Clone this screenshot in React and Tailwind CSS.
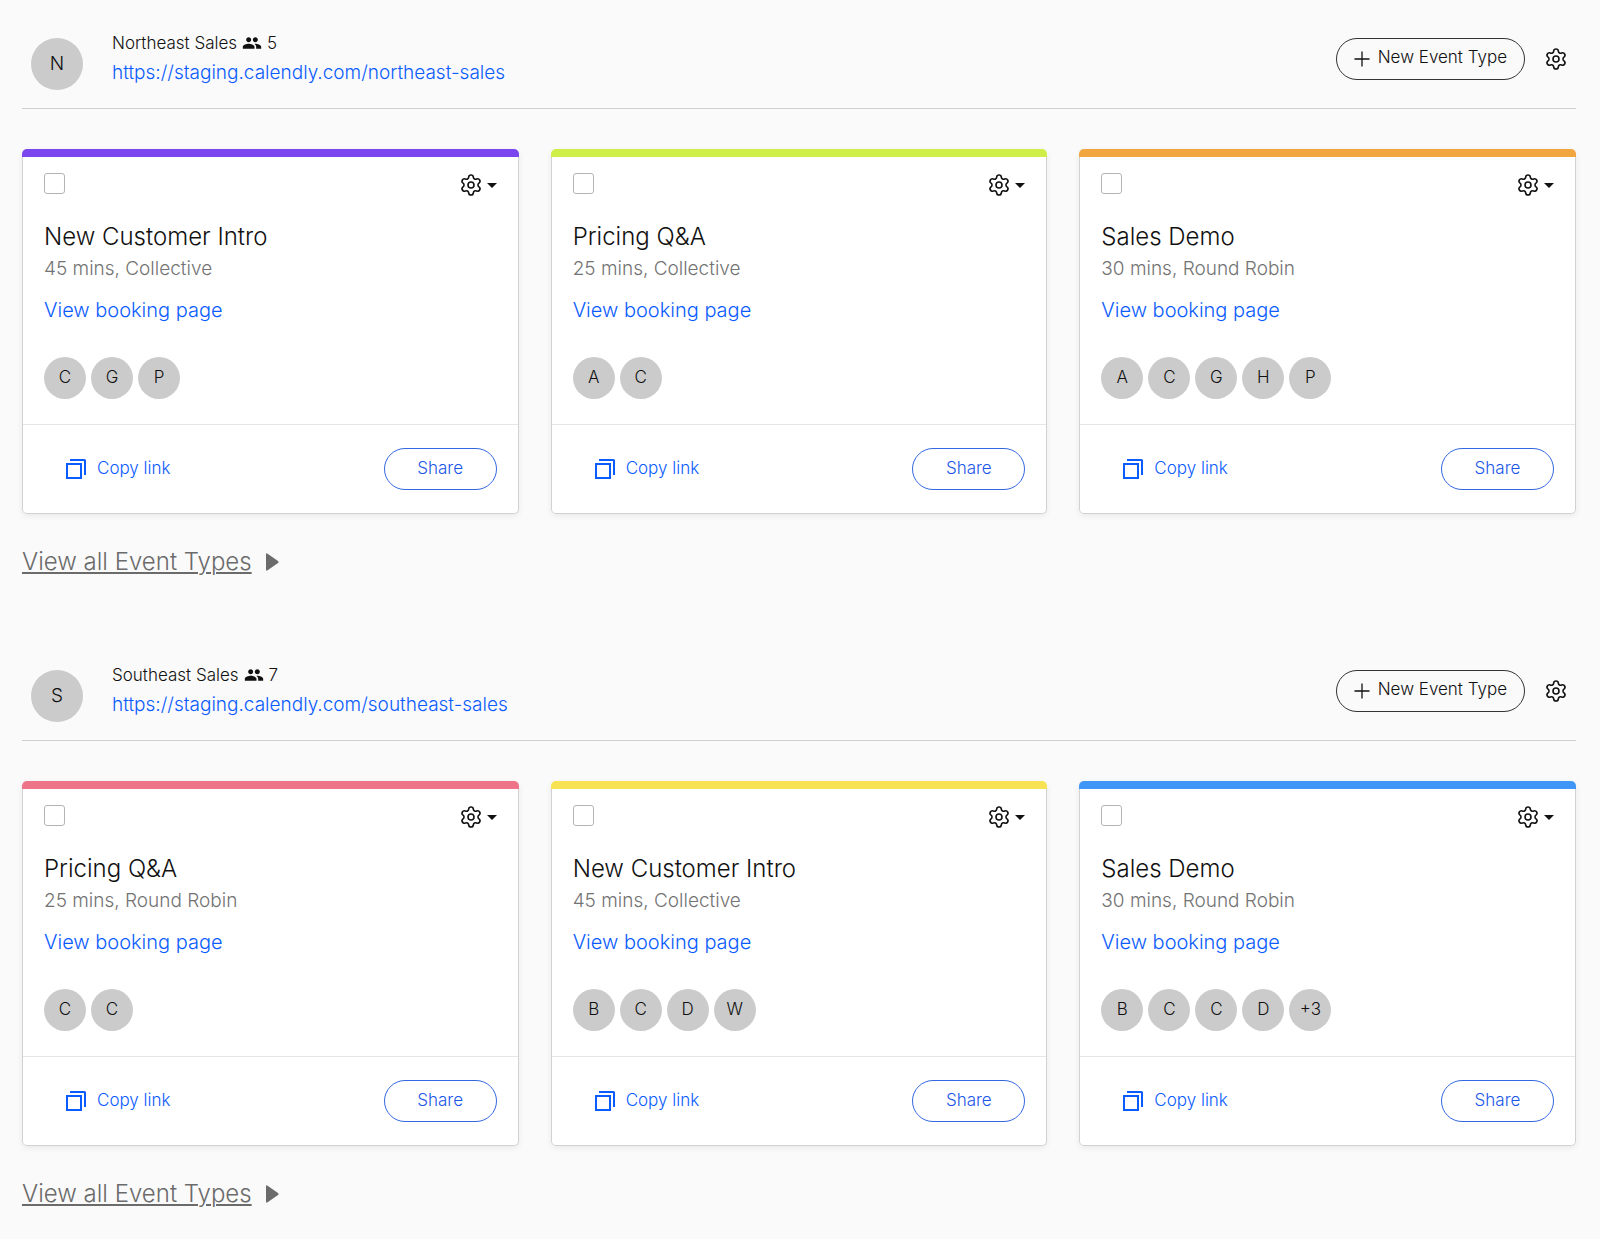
import { Settings } from "lucide-react";
import { MdPeople } from "react-icons/md";

const teams = [
  {
    name: "Northeast Sales",
    members: 5,
    url: "https://staging.calendly.com/northeast-sales",
    events: [
      { title: "New Customer Intro", info: "45 mins, Collective", bar: "bg-[#7b46ee]", people: ["C", "G", "P"] },
      { title: "Pricing Q&A", info: "25 mins, Collective", bar: "bg-[#d0ee48]", people: ["A", "C"] },
      { title: "Sales Demo", info: "30 mins, Round Robin", bar: "bg-[#f2a63f]", people: ["A", "C", "G", "H", "P"] },
    ],
  },
  {
    name: "Southeast Sales",
    members: 7,
    url: "https://staging.calendly.com/southeast-sales",
    events: [
      { title: "Pricing Q&A", info: "25 mins, Round Robin", bar: "bg-[#ee7488]", people: ["C", "C"] },
      { title: "New Customer Intro", info: "45 mins, Collective", bar: "bg-[#f6e252]", people: ["B", "C", "D", "W"] },
      { title: "Sales Demo", info: "30 mins, Round Robin", bar: "bg-[#3f96f6]", people: ["B", "C", "C", "D", "+3"] },
    ],
  },
];

function CopyIcon() {
  return (
    <svg viewBox="0 0 22 22" className="size-[22px]" fill="none" stroke="currentColor" strokeWidth="2" aria-hidden="true">
      <rect x="2" y="6" width="14" height="14" />
      <path d="M5 2h14.4a.6.6 0 0 1 .6.6V17" />
    </svg>
  );
}

function PlusIcon() {
  return (
    <svg viewBox="0 0 16 16" className="size-4" fill="none" stroke="currentColor" strokeWidth="1.3" aria-hidden="true">
      <path d="M8 .5v15M.5 8h15" />
    </svg>
  );
}

function EventCard({ event }) {
  return (
    <article className="rounded-[5px] bg-white shadow-[0_2px_6px_rgba(0,0,0,0.07)]">
      <div className={`h-2 rounded-t-[5px] ${event.bar}`} />
      <div className="rounded-b-[5px] border border-t-0 border-[#d2d2d2]">
        <div className="px-[21px] pt-4 pb-[25px]">
          <div className="flex items-start justify-between">
            <input
              type="checkbox"
              aria-label={`Select ${event.title}`}
              className="size-[21px] appearance-none rounded-[3px] border border-[#b4b4b4] bg-white checked:bg-[#0b5cff]"
            />
            <button type="button" aria-label={`${event.title} settings`} className="flex items-center gap-1">
              <Settings className="size-6" strokeWidth={1.6} />
              <svg viewBox="0 0 10 5" className="h-[5px] w-2.5" fill="currentColor" aria-hidden="true">
                <path d="M0 0h10L5 5z" />
              </svg>
            </button>
          </div>
          <h3 className="mt-6 text-[24px] leading-8">{event.title}</h3>
          <p className="text-[19px] leading-8 text-[#737373]">{event.info}</p>
          <a href="#booking" className="mt-[11px] block w-fit text-[20px] leading-7 text-[#0b5cff]">
            View booking page
          </a>
          <ul className="mt-[33px] flex gap-[5px]">
            {event.people.map((p, i) => (
              <li key={i} className="flex size-[42px] items-center justify-center rounded-full bg-[#cbcbcb] text-[17px]">
                {p}
              </li>
            ))}
          </ul>
        </div>
        <div className="flex items-center justify-between border-t border-[#e6e6e6] py-[23px] pr-[21px] pl-[42px] text-[17px] text-[#0b5cff]">
          <button type="button" className="flex items-center gap-2.5">
            <CopyIcon />
            <span>Copy link</span>
          </button>
          <button type="button" className="h-[42px] w-[113px] rounded-full border border-[#3568e0] text-[#1a56e8]">
            Share
          </button>
        </div>
      </div>
    </article>
  );
}

function Team({ team }) {
  return (
    <section>
      <header className="flex items-start border-b border-[#cfcfcf] pb-[18px] pl-[9px]">
        <div className="mt-[7px] flex size-[52px] items-center justify-center rounded-full bg-[#cbcbcb] text-[19px]">
          {team.name[0]}
        </div>
        <div className="ml-[29px] flex-1">
          <h2 className="flex items-center gap-[5px] text-[17px] leading-6">
            {team.name}
            <MdPeople className="size-5" aria-hidden="true" />
            <span>{team.members}</span>
          </h2>
          <a href="#team" className="mt-1 block w-fit text-[19px] leading-7 text-[#0b5cff]">
            {team.url}
          </a>
        </div>
        <div className="mt-[7px] flex items-center gap-[19px] pr-2">
          <button type="button" className="flex h-[42px] items-center gap-2 rounded-full border border-[#333] px-[17px] text-[17px]">
            <PlusIcon />
            <span className="pb-0.5">New Event Type</span>
          </button>
          <button type="button" aria-label={`${team.name} settings`}>
            <Settings className="size-6" strokeWidth={1.6} />
          </button>
        </div>
      </header>
      <div className="mt-10 grid grid-cols-3 gap-8">
        {team.events.map((e) => (
          <EventCard key={e.title} event={e} />
        ))}
      </div>
      <a href="#event-types" className="mt-8 flex w-fit items-center gap-3.5 text-[24px] leading-8 text-[#6b6b6b]">
        <span className="underline decoration-2 underline-offset-2">View all Event Types</span>
        <svg viewBox="0 0 13 18" className="h-[18px] w-[13px]" fill="currentColor" aria-hidden="true">
          <path d="M0 1.5Q0-.3 1.6.7L12 8Q13.200 9 12 10L1.600 17.300Q0 18.300 0 16.500z" />
        </svg>
      </a>
    </section>
  );
}

export default function App() {
  return (
    <main className="flex min-h-screen flex-col gap-[85px] bg-[#fafafa] pr-6 pl-[22px] pt-[31px] pb-7 font-['Inter',sans-serif] font-light text-[#111]">
      {teams.map((t) => (
        <Team key={t.name} team={t} />
      ))}
    </main>
  );
}
